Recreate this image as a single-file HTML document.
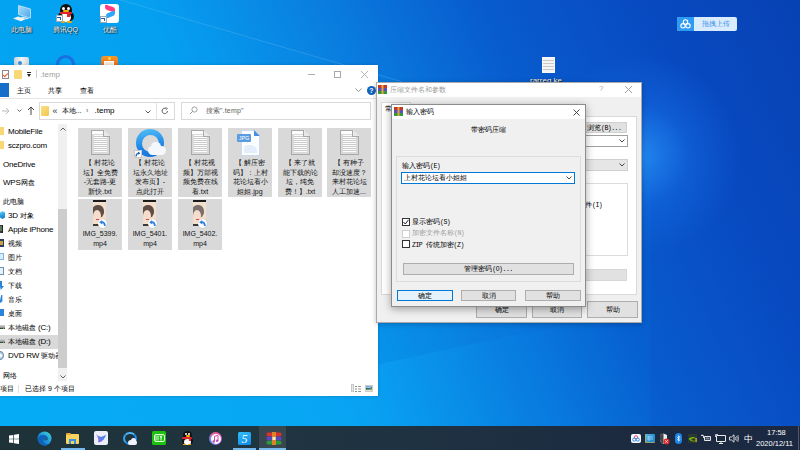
<!DOCTYPE html>
<html><head><meta charset="utf-8">
<style>
*{margin:0;padding:0;box-sizing:border-box}
html,body{width:800px;height:450px;overflow:hidden}
body{position:relative;font-family:"Liberation Sans",sans-serif;font-size:8px;color:#000;
background:linear-gradient(65deg,#02a8f2 0%,#06a0f0 35%,#0a7ee0 52%,#085cce 68%,#0849c0 85%,#0742b4 100%)}
.a{position:absolute}
.t{position:absolute;white-space:nowrap;line-height:10px}
.glow{left:540px;top:55px;width:200px;height:200px;border-radius:50%;background:radial-gradient(closest-side,rgba(45,155,255,.7),rgba(30,125,245,.3) 50%,rgba(20,100,230,0))}
.beam{left:95px;top:-8px;width:320px;height:1px;background:rgba(255,255,255,.13);transform:rotate(16.2deg);transform-origin:0 0}
.band{left:0;top:0;width:800px;height:450px;background:rgba(0,170,255,.06);clip-path:polygon(95px -8px,650px 153px,650px 450px,0 450px,0 -8px)}
.beam2{left:0;top:300px;width:642px;height:126px;background:linear-gradient(90deg,rgba(20,185,255,.22) 0,rgba(20,185,255,.22) 376px,rgba(10,165,255,.1) 490px,rgba(0,150,255,0) 620px);clip-path:polygon(0 0,376px 65px,490px 40px,566px 25px,642px 10px,642px 126px,0 126px)}
.taskbar{left:0;top:426px;width:800px;height:24px;background:linear-gradient(90deg,#1e3238 0%,#1f3540 35%,#1e3042 60%,#1c2a40 80%,#1b2842 100%)}
.win{background:#fff;box-shadow:0 0 3px rgba(0,0,0,.2)}
.dlg{background:#f0f0f0;box-shadow:0 0 6px rgba(0,0,0,.3);border:1px solid #9a9a9a}
.ex{font-size:8px;color:#000}
.tile{position:absolute;top:128px;width:44px;height:69px;background:#d9d9d9}
.tile2{position:absolute;top:199px;width:44px;height:51px;background:#d9d9d9}
.tl{position:absolute;left:0;width:44px;text-align:center;font-size:7px;line-height:9.7px;color:#111;white-space:nowrap}
.doc{position:absolute;width:19px;height:25px;background:repeating-linear-gradient(180deg,#fdfdfd 0,#fdfdfd 1px,#cbcbcb 1px,#cbcbcb 2px);border:1px solid #a8a8a8;background-clip:content-box;padding:4px 2px 2px 2px}
.doc:before{content:"";position:absolute;left:0;top:0;width:17px;height:3px;background:#fdfdfd}
.doc:after{content:"";position:absolute;right:-1px;top:-1px;width:6px;height:6px;background:linear-gradient(225deg,#d9d9d9 50%,#e8e8e8 50%);border-left:1px solid #a8a8a8;border-bottom:1px solid #a8a8a8}
.doc i{display:none}
.nav{position:absolute;left:8px;font-size:7px;line-height:10px;white-space:nowrap;color:#000}
.l{font-size:8px;letter-spacing:-0.2px}
.dt{font-size:7px;line-height:10px;color:#000}
.m{font-family:"Liberation Mono",monospace;font-size:6.5px;letter-spacing:-0.5px}
.btn{background:#e1e1e1;border:1px solid #adadad}
.bt{position:absolute;left:0;top:0;width:100%;height:100%;text-align:center;font-size:7px;line-height:15px;white-space:nowrap}
.cb{position:absolute;width:8px;height:8px;background:#fff;border:1px solid #333}
.dl{font-size:7px;line-height:10px;color:#fff;text-shadow:0 0 1px rgba(0,0,0,.9),1px 1px 1px rgba(0,0,0,.7)}
</style></head><body>
<div class="a glow"></div>
<div class="a band"></div>
<div class="a beam"></div>
<div class="a beam2"></div>

<!-- desktop icons -->
<div class="a" id="desk" style="left:0;top:0;width:800px;height:450px">
 <!-- this pc -->
 <svg class="a" style="left:12px;top:4px" width="21" height="19"><path d="M6.5 1.5L18.5 5V14L6.5 10.5Z" fill="url(#scr)" stroke="#cfe6f6" stroke-width=".8"/><defs><linearGradient id="scr" x1="0" y1="0" x2="1" y2="1"><stop offset="0" stop-color="#a8dcfb"/><stop offset="1" stop-color="#4aa6ea"/></linearGradient></defs><path d="M10 12.5L17 14.5L15 15.3L9 13.5Z" fill="#e6eef4"/><path d="M1 14.5L6 12.5L14 15L9 17.3Z" fill="#eef2f5"/></svg>
 <div class="t dl" style="left:11px;top:25px">此电脑</div>
 <!-- qq -->
 <div class="a" style="left:60px;top:4px;width:12px;height:11px;border-radius:6px 6px 3px 3px;background:#111"></div>
 <div class="a" style="left:62px;top:7px;width:3px;height:3px;border-radius:50%;background:#fff"></div>
 <div class="a" style="left:67px;top:7px;width:3px;height:3px;border-radius:50%;background:#fff"></div>
 <div class="a" style="left:63px;top:10px;width:6px;height:2px;border-radius:1px;background:#f5b000"></div>
 <div class="a" style="left:58px;top:12px;width:16px;height:9px;border-radius:5px 5px 5px 5px;background:#111"></div>
 <div class="a" style="left:61px;top:13px;width:10px;height:9px;border-radius:50%;background:#fff"></div>
 <div class="a" style="left:60px;top:12px;width:12px;height:2px;background:#e0262a"></div>
 <div class="a" style="left:67px;top:13px;width:3px;height:4px;background:#e0262a"></div>
 <div class="a" style="left:61px;top:21px;width:4px;height:2px;background:#f5a800;border-radius:1px"></div>
 <div class="a" style="left:67px;top:21px;width:5px;height:2px;background:#f5a800;border-radius:1px"></div>
 <div class="a" style="left:56px;top:15px;width:7px;height:7px;background:#fff;border:1px solid #9ab"></div>
 <div class="a" style="left:57px;top:17px;width:4px;height:3px;border-top:1px solid #1c5cb5;border-right:1px solid #1c5cb5"></div>
 <div class="t dl" style="left:53px;top:25px">腾讯QQ</div>
 <!-- youku -->
 <div class="a" style="left:100px;top:4px;width:19px;height:19px;border-radius:3px;background:#fff"></div>
 <div class="a" style="left:105px;top:6px;width:10px;height:5px;background:#ff3d7f;transform:skewY(20deg);border-radius:2px"></div>
 <div class="a" style="left:106px;top:12px;width:9px;height:5px;background:#2aa8ff;transform:skewY(-20deg);border-radius:2px"></div>
 <div class="a" style="left:100px;top:16px;width:7px;height:7px;background:#fff;border:1px solid #9ab"></div>
 <div class="a" style="left:101px;top:18px;width:4px;height:3px;border-top:1px solid #1c5cb5;border-right:1px solid #1c5cb5"></div>
 <div class="t dl" style="left:103px;top:25px">优酷</div>
 <!-- row 2 partial -->
 <div class="a" style="left:14px;top:57px;width:15px;height:9px;background:linear-gradient(90deg,#c9d2d8,#f2f5f7 50%,#cfd6db);border-radius:2px 2px 0 0"></div>
 <div class="a" style="left:18px;top:61px;width:4px;height:4px;border-radius:50%;background:#3a8fd8"></div>
 <div class="a" style="left:56px;top:55px;width:19px;height:19px;border-radius:50%;border:3px solid #1b6fe0"></div>
 <div class="a" style="left:101px;top:56px;width:17px;height:10px;background:linear-gradient(#f59a2a,#e8641a);border-radius:3px 3px 0 0"></div>
 <div class="a" style="left:108px;top:57px;width:3px;height:3px;border-radius:50%;background:#ffd84a"></div>
 <div class="a" style="left:104px;top:61px;width:10px;height:5px;background:#f4e8dc;border:1px solid #fff;border-bottom:none"></div>
 <!-- rarreg.key -->
 <div class="a" style="left:542px;top:57px;width:13px;height:16px;background:repeating-linear-gradient(180deg,#f4f4f4 0,#f4f4f4 2px,#c8c8c8 2px,#c8c8c8 3px);border:1px solid #f8f8f8"></div>
 <div class="t dl" style="left:530px;top:76px;font-size:8px">rarreg.ke</div>
 <!-- baidu drag widget -->
 <div class="a" style="left:677px;top:17px;width:60px;height:14px;border-radius:2px;background:#d8ecfd;overflow:hidden">
  <div class="a" style="left:0;top:0;width:17px;height:14px;background:#2d9af3"></div>
 </div>
 <svg class="a" style="left:680px;top:19px" width="11" height="10"><circle cx="5.5" cy="3" r="2.2" stroke="#fff" stroke-width="1.1" fill="none"/><circle cx="3" cy="6.8" r="2.2" stroke="#fff" stroke-width="1.1" fill="none"/><circle cx="8" cy="6.8" r="2.2" stroke="#fff" stroke-width="1.1" fill="none"/></svg>
 <div class="t" style="left:702px;top:19px;font-size:7px;color:#3a8de6">拖拽上传</div>
</div>

<!-- ============ EXPLORER ============ -->
<div class="a win ex" style="left:0;top:65px;width:378px;height:331px;overflow:hidden">
 <div style="position:absolute;left:-65px;top:-65px;width:800px;height:450px;transform:translate(65px,65px)"></div>
</div>
<div class="a" id="ex" style="left:0;top:0;width:378px;height:396px">
 <!-- title bar -->
 <div class="a" style="left:2px;top:70px;width:7px;height:9px;background:#fff;border:1px solid #8a8a8a"></div>
 <div class="a" style="left:3px;top:73px;width:5px;height:3px;border-left:1px solid #e05a2a;border-bottom:1px solid #e05a2a;transform:rotate(-45deg)"></div>
 <div class="a" style="left:14px;top:70px;width:8px;height:9px;background:#f8d775;border-radius:1px"></div>
 <div class="a" style="left:27px;top:72px;width:4px;height:1px;background:#222"></div>
 <div class="a" style="left:27px;top:74px;width:0;height:0;border-left:2px solid transparent;border-right:2px solid transparent;border-top:3px solid #222"></div>
 <div class="a" style="left:36px;top:70px;width:1px;height:8px;background:#d0d0d0"></div>
 <div class="t" style="left:40px;top:70px;font-size:8px;color:#a0a0a0">.temp</div>
 <div class="a" style="left:308px;top:74px;width:7px;height:1px;background:#b0b0b0"></div>
 <div class="a" style="left:334px;top:71px;width:7px;height:7px;border:1px solid #a8a8a8"></div>
 <svg class="a" style="left:360px;top:70px" width="9" height="9"><path d="M1 1L8 8M8 1L1 8" stroke="#aaa" stroke-width=".9"/></svg>
 <!-- ribbon -->
 <div class="a" style="left:0;top:83px;width:9px;height:14px;background:#166ec8"></div>
 <div class="t" style="left:17px;top:85.5px;font-size:7px">主页</div>
 <div class="t" style="left:48px;top:85.5px;font-size:7px">共享</div>
 <div class="t" style="left:79.5px;top:85.5px;font-size:7px">查看</div>
 <svg class="a" style="left:355px;top:88px" width="7" height="4"><path d="M0.5 0.5L3.5 3.5L6.5 0.5" stroke="#8a8a8a" fill="none" stroke-width=".9"/></svg>
 <div class="a" style="left:367px;top:86px;width:9px;height:9px;border-radius:50%;background:#1262be;color:#fff;font-size:7px;line-height:9px;text-align:center;font-weight:bold">?</div>
 <div class="a" style="left:0;top:98px;width:378px;height:1px;background:#e6e6e6"></div>
 <!-- address row -->
 <svg class="a" style="left:2px;top:107px" width="8" height="8"><path d="M0 4H7M4 1L7 4L4 7" stroke="#bbb" fill="none" stroke-width="1"/></svg>
 <svg class="a" style="left:17px;top:109px" width="5" height="4"><path d="M0.5 0.5L2.5 2.5L4.5 0.5" stroke="#666" fill="none" stroke-width="1"/></svg>
 <svg class="a" style="left:27px;top:106px" width="8" height="9"><path d="M4 9V1M1 4L4 1L7 4" stroke="#444" fill="none" stroke-width="1"/></svg>
 <div class="a" style="left:39px;top:102px;width:136px;height:18px;border:1px solid #d9d9d9"></div>
 <div class="a" style="left:156px;top:103px;width:1px;height:16px;background:#e3e3e3"></div>
 <div class="a" style="left:41px;top:106px;width:8px;height:10px;background:linear-gradient(135deg,#fbe08a,#f2c84a);border-radius:1px"></div>
 <div class="t" style="left:52.5px;top:105.5px;font-size:9px;color:#333">«</div>
 <div class="t" style="left:61.5px;top:106px;font-size:7px">本地...</div>
 <div class="t" style="left:86px;top:106px;font-size:7px;color:#555">›</div>
 <div class="t" style="left:94.5px;top:106px;font-size:8px">.temp</div>
 <svg class="a" style="left:145px;top:110px" width="6" height="4"><path d="M0.5 0.5L3 3L5.5 0.5" stroke="#555" fill="none" stroke-width="1"/></svg>
 <svg class="a" style="left:161px;top:107px" width="8" height="8"><path d="M6.5 4A2.7 2.7 0 1 1 5.2 1.6" stroke="#666" fill="none" stroke-width="1"/><path d="M4.5 0.3L6.5 1.5L4.8 3" stroke="#666" fill="none" stroke-width="0.8"/></svg>
 <div class="a" style="left:181px;top:102px;width:190px;height:18px;border:1px solid #d9d9d9"></div>
 <svg class="a" style="left:189px;top:106px" width="9" height="9"><circle cx="5.5" cy="3.5" r="2.6" stroke="#8a8a8a" fill="none" stroke-width="0.8"/><path d="M3.6 5.4L1 8" stroke="#8a8a8a" stroke-width="0.9"/></svg>
 <div class="t" style="left:205.5px;top:106px;font-size:7px;color:#606060;letter-spacing:0.2px">搜索".temp"</div>
 <!-- nav pane -->
 <div class="a" style="left:58px;top:124px;width:9px;height:257px;background:#f0f0f0"></div>
 <div class="a" style="left:58px;top:209px;width:9px;height:159px;background:#cdcdcd"></div>
 <svg class="a" style="left:60px;top:127px" width="6" height="4"><path d="M0.5 3.5L3 1L5.5 3.5" stroke="#606060" fill="none" stroke-width="1"/></svg>
 <svg class="a" style="left:60px;top:375px" width="6" height="4"><path d="M0.5 0.5L3 3L5.5 0.5" stroke="#606060" fill="none" stroke-width="1"/></svg>
 <div class="a" style="left:0;top:335px;width:58px;height:14px;background:#d9d9d9"></div>
 <div class="a" style="left:0;top:127px;width:4px;height:8px;background:#f8d775"></div>
 <div class="nav" style="top:127px"><span class="l">MobileFile</span></div>
 <div class="a" style="left:0;top:141px;width:4px;height:8px;background:#f8d775"></div>
 <div class="nav" style="top:141px"><span class="l">sczpro.com</span></div>
 <div class="nav" style="left:3px;top:160px"><span class="l">OneDrive</span></div>
 <div class="nav" style="left:3px;top:178px"><span class="l">WPS</span>网盘</div>
 <div class="nav" style="left:3px;top:197px">此电脑</div>
 <div class="a" style="left:0;top:211px;width:5px;height:8px;background:linear-gradient(160deg,#7fd8fa,#2a9ee0 50%,#1670c0);clip-path:polygon(0 20%,50% 0,100% 20%,100% 80%,50% 100%,0 80%)"></div>
 <div class="nav" style="top:211px"><span class="l">3D </span>对象</div>
 <div class="a" style="left:0;top:225px;width:3px;height:8px;background:#3a3a3a;border-right:1px solid #222"></div>
 <div class="a" style="left:0;top:226px;width:2px;height:5px;background:#5a7a5a"></div>
 <div class="nav" style="top:225px"><span class="l">Apple iPhone</span></div>
 <div class="a" style="left:0;top:239px;width:4px;height:8px;background:#2c3e5c"></div>
 <div class="a" style="left:0;top:241px;width:3px;height:4px;background:#c8a040"></div>
 <div class="nav" style="top:239px">视频</div>
 <div class="a" style="left:0;top:253px;width:4px;height:7px;background:#d8ecfa;border:1px solid #7db6e6;border-left:none"></div>
 <div class="nav" style="top:253px">图片</div>
 <div class="a" style="left:0;top:267px;width:4px;height:8px;background:#e9f0f8;border:1px solid #6a8fb8;border-left:none"></div>
 <div class="nav" style="top:267px">文档</div>
 <div class="a" style="left:0;top:281px;width:4px;height:9px;background:#2a85d8;clip-path:polygon(0 0,50% 0,50% 55%,100% 55%,20% 100%,0 60%)"></div>
 <div class="nav" style="top:281px">下载</div>
 <div class="a" style="left:0;top:295px;width:4px;height:8px;background:#2a85d8;clip-path:polygon(30% 0,60% 0,60% 80%,0 100%,0 70%)"></div>
 <div class="nav" style="top:295px">音乐</div>
 <div class="a" style="left:0;top:309px;width:4px;height:7px;background:#2a85d8"></div>
 <div class="nav" style="top:309px">桌面</div>
 <div class="a" style="left:0;top:325px;width:5px;height:4px;background:linear-gradient(#d8d8d8,#8a8a8a);border-bottom:1px solid #444"></div>
 <div class="a" style="left:3px;top:328px;width:1px;height:1px;background:#3c3"></div>
 <div class="nav" style="top:323px">本地磁盘<span class="l"> (C:)</span></div>
 <div class="a" style="left:0;top:339px;width:5px;height:4px;background:linear-gradient(#d8d8d8,#8a8a8a);border-bottom:1px solid #444"></div>
 <div class="a" style="left:3px;top:342px;width:1px;height:1px;background:#3c3"></div>
 <div class="nav" style="top:337px">本地磁盘<span class="l"> (D:)</span></div>
 <div class="a" style="left:-4px;top:351px;width:8px;height:9px;border-radius:50%;background:radial-gradient(circle at 60% 50%,#fff 0,#fff 1px,#c9dcec 1.5px,#7aa6cc 100%);border:1px solid #6a8fb0"></div>
 <div class="nav" style="top:351px;width:50px;overflow:hidden"><span class="l">DVD RW </span>驱动器</div>
 <div class="nav" style="left:3px;top:371px">网络</div>
 <!-- status bar -->
 <div class="t" style="left:0;top:384px;font-size:7px">项目</div>
 <div class="a" style="left:18px;top:385px;width:1px;height:8px;background:#e0e0e0"></div>
 <div class="t" style="left:25px;top:384px;font-size:7px">已选择 9 个项目</div>
 <div class="a" style="left:351px;top:384px;width:3px;height:8px;background:#e8e8e8;border:1px solid #c8c8c8"></div>
 <div class="a" style="left:355px;top:385.5px;width:2px;height:1px;background:#8a8a8a;box-shadow:0 2.5px 0 #8a8a8a,0 5px 0 #8a8a8a"></div>
 <div class="a" style="left:358px;top:385.5px;width:3px;height:1px;background:#9a9a9a;box-shadow:0 2.5px 0 #9a9a9a,0 5px 0 #9a9a9a"></div>
 <div class="a" style="left:365px;top:385px;width:8px;height:7px;background:#e8e4dc;border:1px solid #d0ccc4"></div>
 <div class="a" style="left:366px;top:386px;width:6px;height:4px;background:linear-gradient(170deg,#5a9ee0 0,#9ec8ee 45%,#2e6a4a 50%,#a0b8a8 100%)"></div>
 <!-- tiles row1 -->
 <div class="tile" style="left:78px">
   <div class="doc" style="left:13px;top:2px"><i style="top:7px"></i><i style="top:9px"></i><i style="top:11px"></i><i style="top:13px"></i><i style="top:15px"></i><i style="top:17px"></i><i style="top:19px"></i></div>
   <div class="tl" style="top:30px">【 村花论<br>坛】全免费<br>-无套路-更<br>新快.txt</div>
 </div>
 <div class="tile" style="left:128px">
   <div class="a" style="left:8px;top:1px;width:28px;height:28px;border-radius:50%;background:linear-gradient(170deg,#56c0f8,#1d86e6 60%,#1570d8)"></div>
   <div class="a" style="left:13.5px;top:6.5px;width:17px;height:17px;border-radius:50%;background:#d9d9d9"></div>
   <div class="a" style="left:20px;top:18px;width:18px;height:9px;border-radius:5px;background:#f4f8fc"></div>
   <div class="a" style="left:23px;top:14px;width:10px;height:9px;border-radius:50%;background:#f4f8fc"></div>
   <div class="a" style="left:6px;top:22px;width:8px;height:8px;background:#fff;border:1px solid #c8c8c8"></div>
   <svg class="a" style="left:7px;top:23px" width="6" height="6"><path d="M1 5.5Q1 2.5 4 2.2" stroke="#1f5fb8" stroke-width="1.2" fill="none"/><path d="M3 0.5L5.5 2.2L3 3.8Z" fill="#1f5fb8"/></svg>
   <div class="tl" style="top:30px">【 村花论<br>坛永久地址<br>发布页】-<br>点此打开</div>
 </div>
 <div class="tile" style="left:178px">
   <div class="doc" style="left:13px;top:2px"><i style="top:7px"></i><i style="top:9px"></i><i style="top:11px"></i><i style="top:13px"></i><i style="top:15px"></i><i style="top:17px"></i><i style="top:19px"></i></div>
   <div class="tl" style="top:30px">【 村花视<br>频】万部视<br>频免费在线<br>看.txt</div>
 </div>
 <div class="tile" style="left:228px">
   <div class="a" style="left:13px;top:2px;width:19px;height:26px;background:#fbfdff;border:1px solid #c9daf0;clip-path:polygon(0 0,70% 0,100% 22%,100% 100%,0 100%)"></div>
   <div class="a" style="left:26px;top:2px;width:6px;height:6px;background:#4a8fdc;clip-path:polygon(0 0,100% 100%,0 100%)"></div>
   <div class="a" style="left:16px;top:17px;width:13px;height:8px;background:#e4eefa;border-radius:4px 6px 0 0"></div>
   <div class="a" style="left:9px;top:6px;width:14px;height:8px;border-radius:1px;background:#5b9be0;color:#fff;font-size:5.5px;line-height:8px;text-align:center">JPG</div>
   <div class="tl" style="top:30px">【 解压密<br>码】：上村<br>花论坛看小<br>姐姐.jpg</div>
 </div>
 <div class="tile" style="left:278px">
   <div class="doc" style="left:13px;top:2px"><i style="top:7px"></i><i style="top:9px"></i><i style="top:11px"></i><i style="top:13px"></i><i style="top:15px"></i><i style="top:17px"></i><i style="top:19px"></i></div>
   <div class="tl" style="top:30px">【 来了就<br>能下载的论<br>坛，纯免<br>费！】.txt</div>
 </div>
 <div class="tile" style="left:327px">
   <div class="doc" style="left:13px;top:2px"><i style="top:7px"></i><i style="top:9px"></i><i style="top:11px"></i><i style="top:13px"></i><i style="top:15px"></i><i style="top:17px"></i><i style="top:19px"></i></div>
   <div class="tl" style="top:30px">【 有种子<br>却没速度？<br>来村花论坛<br>人工加速...</div>
 </div>
 <!-- tiles row2 -->
 <div class="tile2" style="left:78px">
   <div class="a" style="left:15px;top:1px;width:13px;height:26px;background:#f3e0cc;overflow:hidden">
    <div class="a" style="left:-1px;top:5px;width:12px;height:13px;border-radius:45%;background:#5e4e46"></div>
    <div class="a" style="left:0px;top:10px;width:8px;height:12px;border-radius:50%;background:#f6dccb"></div>
    <div class="a" style="left:3px;top:19px;width:3px;height:1px;background:#d84a5a"></div>
    <div class="a" style="left:0;top:0;width:13px;height:2px;background:#1a1a1a"></div>
    <div class="a" style="left:0;top:24px;width:13px;height:2px;background:#3a3a3a"></div>
   </div>
   <div class="a" style="left:20px;top:20px;width:9px;height:9px;border-radius:50%;background:#fff;box-shadow:0 0 1px rgba(0,0,0,.3)"></div>
   <svg class="a" style="left:21px;top:21px" width="7" height="7"><path d="M5.8 6Q6 2.3 2.5 2.2" stroke="#2b7fe8" stroke-width="1.8" fill="none"/><path d="M3.2 0L0.2 2.2L3.2 4.4Z" fill="#2b7fe8"/></svg>
   <div class="tl" style="top:30px">IMG_5399.<br>mp4</div>
 </div>
 <div class="tile2" style="left:128px">
   <div class="a" style="left:15px;top:1px;width:13px;height:26px;background:#f3e0cc;overflow:hidden">
    <div class="a" style="left:-1px;top:5px;width:12px;height:13px;border-radius:45%;background:#5e4e46"></div>
    <div class="a" style="left:0px;top:10px;width:8px;height:12px;border-radius:50%;background:#f6dccb"></div>
    <div class="a" style="left:3px;top:19px;width:3px;height:1px;background:#d84a5a"></div>
    <div class="a" style="left:0;top:0;width:13px;height:2px;background:#1a1a1a"></div>
    <div class="a" style="left:0;top:24px;width:13px;height:2px;background:#3a3a3a"></div>
   </div>
   <div class="a" style="left:20px;top:20px;width:9px;height:9px;border-radius:50%;background:#fff;box-shadow:0 0 1px rgba(0,0,0,.3)"></div>
   <svg class="a" style="left:21px;top:21px" width="7" height="7"><path d="M5.8 6Q6 2.3 2.5 2.2" stroke="#2b7fe8" stroke-width="1.8" fill="none"/><path d="M3.2 0L0.2 2.2L3.2 4.4Z" fill="#2b7fe8"/></svg>
   <div class="tl" style="top:30px">IMG_5401.<br>mp4</div>
 </div>
 <div class="tile2" style="left:178px">
   <div class="a" style="left:15px;top:1px;width:13px;height:26px;background:#f3e0cc;overflow:hidden">
    <div class="a" style="left:-1px;top:5px;width:12px;height:13px;border-radius:45%;background:#7a716c"></div>
    <div class="a" style="left:0px;top:10px;width:8px;height:12px;border-radius:50%;background:#f6dccb"></div>
    <div class="a" style="left:3px;top:19px;width:3px;height:1px;background:#d84a5a"></div>
    <div class="a" style="left:0;top:0;width:13px;height:2px;background:#1a1a1a"></div>
    <div class="a" style="left:0;top:24px;width:13px;height:2px;background:#3a3a3a"></div>
   </div>
   <div class="a" style="left:20px;top:20px;width:9px;height:9px;border-radius:50%;background:#fff;box-shadow:0 0 1px rgba(0,0,0,.3)"></div>
   <svg class="a" style="left:21px;top:21px" width="7" height="7"><path d="M5.8 6Q6 2.3 2.5 2.2" stroke="#2b7fe8" stroke-width="1.8" fill="none"/><path d="M3.2 0L0.2 2.2L3.2 4.4Z" fill="#2b7fe8"/></svg>
   <div class="tl" style="top:30px">IMG_5402.<br>mp4</div>
 </div>
</div>

<!-- ============ WINRAR PARENT ============ -->
<div class="a" style="left:376px;top:82px;width:266px;height:241px;background:#f0f0f0;border:1px solid #aaa;box-shadow:0 1px 5px rgba(0,0,0,.25)">
 <div class="a" style="left:0;top:0;width:264px;height:14px;background:#fff"></div>
</div>
<div class="a" id="par" style="left:0;top:0;width:800px;height:450px">
 <svg class="a" style="left:378px;top:85px" width="9" height="9"><rect x="0" y="0" width="9" height="3" fill="#c0392b"/><rect x="0" y="3" width="9" height="3" fill="#5b4fbf"/><rect x="0" y="6" width="9" height="3" fill="#2e9a3a"/><rect x="3.5" y="0" width="2" height="9" fill="#e8a33a"/></svg>
 <div class="t dt" style="left:390px;top:84.5px;color:#9a9a9a">压缩文件名和参数</div>
 <div class="t" style="left:599px;top:84px;font-size:8px;color:#aaa">?</div>
 <svg class="a" style="left:624px;top:85px" width="9" height="9"><path d="M1 1L8 8M8 1L1 8" stroke="#999" stroke-width=".9"/></svg>
 <div class="a" style="left:381px;top:116px;width:256px;height:179px;background:#fff;border:1px solid #d9d9d9"></div>
 <div class="a" style="left:381px;top:102px;width:30px;height:16px;background:#fff;border:1px solid #d9d9d9;border-bottom:none"></div>
 <div class="a" style="left:382px;top:115px;width:28px;height:3px;background:#fff"></div>
 <div class="t dt" style="left:385px;top:104px">常规</div>
 <div class="a btn" style="left:585px;top:122px;width:42px;height:11px;background:#e1e1e1;border:1px solid #d0d0d0"></div>
 <div class="t dt" style="left:587px;top:122.5px;font-size:6.5px">浏览<span class="m">(B)...</span></div>
 <div class="a" style="left:585px;top:135px;width:43px;height:12px;background:#fff;border:1px solid #a0a0a0"></div>
 <svg class="a" style="left:619px;top:139px" width="6" height="4"><path d="M0.5 0.5L3 3L5.5 0.5" stroke="#444" fill="none" stroke-width="1"/></svg>
 <div class="a" style="left:585px;top:159px;width:43px;height:12px;background:#e6e6e6;border:1px solid #cfcfcf"></div>
 <svg class="a" style="left:619px;top:163px" width="6" height="4"><path d="M0.5 0.5L3 3L5.5 0.5" stroke="#444" fill="none" stroke-width="1"/></svg>
 <div class="a" style="left:560px;top:183px;width:68px;height:73px;background:#fff;border:1px solid #dcdcdc"></div>
 <div class="t dt" style="left:585px;top:200px">件<span class="m">(I)</span></div>
 <div class="a" style="left:560px;top:269px;width:67px;height:12px;background:#e1e1e1;border:1px solid #d6d6d6"></div>
 <div class="a btn" style="left:476px;top:301px;width:51px;height:17px"><div class="bt">确定</div></div>
 <div class="a btn" style="left:532px;top:301px;width:50px;height:17px"><div class="bt">取消</div></div>
 <div class="a btn" style="left:587px;top:301px;width:51px;height:17px"><div class="bt">帮助</div></div>
</div>

<!-- ============ PASSWORD DIALOG ============ -->
<div class="a" style="left:391px;top:104px;width:195px;height:203px;background:#f0f0f0;border:1px solid #8c8c8c;box-shadow:0 2px 8px rgba(0,0,0,.35)">
 <div class="a" style="left:0;top:0;width:193px;height:14px;background:#fff"></div>
</div>
<div class="a" id="pwd" style="left:0;top:0;width:800px;height:450px">
 <svg class="a" style="left:394px;top:107px" width="9" height="9"><rect x="0" y="0" width="9" height="3" fill="#c0392b"/><rect x="0" y="3" width="9" height="3" fill="#5b4fbf"/><rect x="0" y="6" width="9" height="3" fill="#2e9a3a"/><rect x="3.5" y="0" width="2" height="9" fill="#e8a33a"/></svg>
 <div class="t dt" style="left:406px;top:107px">输入密码</div>
 <svg class="a" style="left:572.5px;top:108.5px" width="7" height="7"><path d="M0.5 0.5L6.5 6.5M6.5 0.5L0.5 6.5" stroke="#333" stroke-width=".9"/></svg>
 <div class="t dt" style="left:471px;top:125px">带密码压缩</div>
 <div class="a" style="left:396px;top:156px;width:185px;height:126px;border:1px solid #dcdcdc"></div>
 <div class="t dt" style="left:402px;top:161px">输入密码<span class="m">(E)</span></div>
 <div class="a" style="left:401px;top:172px;width:174px;height:12px;background:#fff;border:1px solid #0078d7"></div>
 <div class="t dt" style="left:404px;top:173px">上村花论坛看小姐姐</div>
 <svg class="a" style="left:566px;top:176px" width="6" height="4"><path d="M0.5 0.5L3 3L5.5 0.5" stroke="#444" fill="none" stroke-width="1"/></svg>
 <div class="a cb" style="left:402px;top:218px"></div>
 <svg class="a" style="left:403px;top:219px" width="6" height="6"><path d="M0.5 3L2.3 5L5.5 0.8" stroke="#222" fill="none" stroke-width="1"/></svg>
 <div class="t dt" style="left:412px;top:216.5px">显示密码<span class="m">(S)</span></div>
 <div class="a cb" style="left:402px;top:230px;border-color:#cfcfcf"></div>
 <div class="t dt" style="left:412px;top:228px;color:#a0a0a0">加密文件名称<span class="m">(N)</span></div>
 <div class="a cb" style="left:402px;top:240px"></div>
 <div class="t dt" style="left:412px;top:239.5px"><span class="m">ZIP </span>传统加密<span class="m">(Z)</span></div>
 <div class="a btn" style="left:403px;top:263px;width:171px;height:12px"><div class="bt" style="line-height:10px">管理密码<span class="m">(O)...</span></div></div>
 <div class="a btn" style="left:397px;top:290px;width:56px;height:11px;background:#e5f1fb;border-color:#0078d7"><div class="bt" style="line-height:9px">确定</div></div>
 <div class="a btn" style="left:461px;top:290px;width:55px;height:11px"><div class="bt" style="line-height:9px">取消</div></div>
 <div class="a btn" style="left:525px;top:290px;width:56px;height:11px"><div class="bt" style="line-height:9px">帮助</div></div>
</div>

<div class="a taskbar"></div>
<div class="a" id="tb" style="left:0;top:0;width:800px;height:450px">
 <svg class="a" style="left:9px;top:434px" width="10" height="10"><path d="M0 1.5L4.3 0.9V4.7H0Z M5 0.8L10 0V4.7H5Z M0 5.3H4.3V9.1L0 8.5Z M5 5.3H10V10L5 9.2Z" fill="#fff"/></svg>
 <!-- edge -->
 <svg class="a" style="left:37px;top:431px" width="15" height="15" viewBox="0 0 15 15"><defs><linearGradient id="eg" x1="0" y1="1" x2="1" y2="0"><stop offset="0" stop-color="#0b4f9c"/><stop offset=".45" stop-color="#1a8fe0"/><stop offset=".8" stop-color="#35c0d8"/><stop offset="1" stop-color="#7ad860"/></linearGradient></defs><circle cx="7.5" cy="7.5" r="7" fill="url(#eg)"/><path d="M1 8.5Q1.5 4 6 4Q10.5 4 11 7.5Q8.5 6.5 7 8Q5.5 10 7.5 12.5Q9 14 12 12.8Q9.5 15.5 5.5 14.3Q1.5 13 1 8.5Z" fill="#0f63b8"/><path d="M7 8Q8.5 6.5 11 7.5Q11 9.5 9 9.6Q7.5 9.6 7 8Z" fill="#1e2c36" opacity=".55"/></svg>
 <!-- explorer -->
 <div class="a" style="left:66px;top:434px;width:13px;height:10px;background:#f8d35e;border-radius:1px"></div>
 <div class="a" style="left:66px;top:433px;width:5px;height:2px;background:#e8a83a;border-radius:1px 1px 0 0"></div>
 <div class="a" style="left:69px;top:439px;width:7px;height:5px;background:#3c8fe0"></div>
 <div class="a" style="left:71px;top:441px;width:3px;height:3px;background:#f8d35e"></div>
 <div class="a" style="left:61px;top:448px;width:24px;height:2px;background:#76b9ed"></div>
 <!-- feishu-ish -->
 <div class="a" style="left:94px;top:431px;width:14px;height:14px;border-radius:2px;background:#eceefa"></div>
 <svg class="a" style="left:95px;top:432px" width="12" height="12"><path d="M1 2C4 5 6 6 11 3C9 8 6 11 3 10C4 8 3 5 1 2Z" fill="#7a73e8"/><path d="M5 6L11 3L8 8Z" fill="#3b8df0"/></svg>
 <!-- qq browser -->
 <div class="a" style="left:123px;top:432px;width:13.5px;height:13px;border-radius:50%;border:2.2px solid #1e8ef0;border-top-color:#4ab8f8;border-left-color:#34a4f4"></div>
 <div class="a" style="left:128px;top:440px;width:9px;height:5px;border-radius:3px 3px 2px 2px;background:#eef4fa"></div>
 <div class="a" style="left:130.5px;top:437.5px;width:5px;height:5px;border-radius:50%;background:#eef4fa"></div>
 <!-- iqiyi -->
 <div class="a" style="left:152px;top:431px;width:14px;height:14px;border-radius:1.5px;background:#1cc20f"></div>
 <div class="a" style="left:153.5px;top:434px;width:11px;height:8px;border:1px solid #e8ffe0;border-radius:2px"></div>
 <svg class="a" style="left:155px;top:435px" width="8" height="6"><path d="M1 0.5V5.5M3 0.5V5.5M5 0.5L6 3L7 0.5M6 3V5.5" stroke="#fff" stroke-width=".9" fill="none"/></svg>
 <!-- qq -->
 <div class="a" style="left:183px;top:431px;width:9px;height:8px;border-radius:5px 5px 2px 2px;background:#111"></div>
 <div class="a" style="left:184.5px;top:433px;width:2px;height:2px;border-radius:50%;background:#fff"></div>
 <div class="a" style="left:188px;top:433px;width:2px;height:2px;border-radius:50%;background:#fff"></div>
 <div class="a" style="left:185.5px;top:435px;width:4px;height:1.5px;border-radius:1px;background:#f5b000"></div>
 <div class="a" style="left:181.5px;top:438px;width:11px;height:6px;border-radius:4px;background:#111"></div>
 <div class="a" style="left:183.5px;top:438.5px;width:7px;height:6px;border-radius:50%;background:#fff"></div>
 <div class="a" style="left:182px;top:437px;width:10px;height:2px;background:#e0262a;border-radius:1px"></div>
 <div class="a" style="left:189px;top:438px;width:2px;height:3px;background:#e0262a"></div>
 <div class="a" style="left:183px;top:444px;width:3px;height:1px;background:#f5a800"></div>
 <div class="a" style="left:188px;top:444px;width:3px;height:1px;background:#f5a800"></div>
 <!-- itunes -->
 <div class="a" style="left:209px;top:432px;width:13px;height:13px;border-radius:50%;background:conic-gradient(#f35a8c,#c04ee0,#5a8cf5,#f35a8c)"></div>
 <div class="a" style="left:210.5px;top:433.5px;width:10px;height:10px;border-radius:50%;background:#fff"></div>
 <svg class="a" style="left:212px;top:435px" width="7" height="8"><path d="M2.5 6.5V1.2L6 0.5V5.5" stroke="#d04aa0" stroke-width="1" fill="none"/><circle cx="1.7" cy="6.5" r="1.3" fill="#d04aa0"/><circle cx="5.2" cy="5.7" r="1.3" fill="#b050d0"/></svg>
 <!-- 5 -->
 <div class="a" style="left:238px;top:432px;width:13px;height:13px;border-radius:1.5px;background:linear-gradient(160deg,#34bcf8,#0b8ae8)"></div>
 <div class="t" style="left:241.5px;top:432.5px;font-family:'Liberation Serif',serif;font-style:italic;font-size:12px;color:#fff;line-height:12px">5</div>
 <div class="a" style="left:233px;top:448px;width:23px;height:2px;background:#76b9ed"></div>
 <!-- winrar (active) -->
 <div class="a" style="left:259px;top:426px;width:27px;height:24px;background:#384650"></div>
 <svg class="a" style="left:265.5px;top:432px" width="16" height="13"><rect x="0.5" y="0.5" width="15" height="3.8" rx="1.5" fill="#d8302c"/><rect x="0.5" y="4.6" width="15" height="3.8" rx="1.5" fill="#5848bc"/><rect x="0.5" y="8.7" width="15" height="3.8" rx="1.5" fill="#2a9a3a"/><rect x="6" y="0" width="4" height="13" fill="#d8842a"/><rect x="6.5" y="5" width="3" height="3" fill="#f6ecd0"/></svg>
 <div class="a" style="left:259px;top:448px;width:27px;height:2px;background:#76b9ed"></div>
 <!-- tray -->
 <div class="a" style="left:631px;top:434px;width:10px;height:9px;border-radius:2px;background:#f6f8fb"></div>
 <svg class="a" style="left:632px;top:435px" width="8" height="7"><circle cx="4" cy="2.3" r="1.6" stroke="#e84a6a" stroke-width="1" fill="none"/><circle cx="2.2" cy="4.6" r="1.6" stroke="#3a8ef0" stroke-width="1" fill="none"/><circle cx="5.8" cy="4.6" r="1.6" stroke="#3a8ef0" stroke-width="1" fill="none"/></svg>
 <div class="a" style="left:645px;top:434px;width:10px;height:9px;border-radius:1px;background:linear-gradient(135deg,#5ab8e8,#2a90d0 60%,#2a80c0);box-shadow:inset 1px -1px 0 rgba(232,176,48,.6)"></div>
 <svg class="a" style="left:647px;top:436px" width="6" height="5"><path d="M0 1H6M0 3H6M2 0V5" stroke="#bfe6fb" stroke-width=".6"/></svg>
 <svg class="a" style="left:659px;top:433px" width="11" height="12"><path d="M1 2L4.5 0.5L8 2V6Q8 9.5 4.5 11Q1 9.5 1 6Z" fill="#eee"/><path d="M1 2L4.5 0.5V11Q1 9.5 1 6Z" fill="#444"/><circle cx="7.5" cy="8.5" r="3" fill="#e02a2a"/><path d="M6.3 7.3L8.7 9.7M8.7 7.3L6.3 9.7" stroke="#fff" stroke-width=".8"/></svg>
 <div class="a" style="left:675px;top:433px;width:7px;height:11px;border-radius:3.5px;background:#1a84e8"></div>
 <svg class="a" style="left:676px;top:435px" width="5" height="7"><path d="M1 1.8L4 4.8L2.5 6.3V0.7L4 2.2L1 5.2" stroke="#fff" stroke-width=".7" fill="none"/></svg>
 <div class="a" style="left:688px;top:434px;width:9px;height:9px;background:#2a3a30"></div>
 <svg class="a" style="left:688px;top:435px" width="9" height="8"><path d="M0.5 4Q4 0.5 8.5 3.5Q5 2.5 3 4.5Q5 6.5 8.5 5.5Q4 8 0.5 4Z" fill="#76b900"/><rect x="7.5" y="3" width="1.2" height="4" fill="#e8c020"/></svg>
 <svg class="a" style="left:700px;top:434px" width="12" height="8"><path d="M4.5 2.5H10.5V6.5H4.5Z" stroke="#e8e8e8" stroke-width="1" fill="none"/><path d="M1 1.5H3.5V4M2.2 1.5V0.5M3.5 3.5H4.5" stroke="#e8e8e8" stroke-width=".9" fill="none"/><rect x="5.5" y="3.5" width="4" height="2" fill="#e8e8e8" opacity=".5"/></svg>
 <svg class="a" style="left:715px;top:434px" width="11" height="10"><path d="M1.5 1.5H10.5V7.5H1.5Z" stroke="#e8e8e8" stroke-width="1" fill="none"/><path d="M6 7.5V9.5M4 9.5H8" stroke="#e8e8e8" stroke-width="1"/><path d="M0.5 0.5V3M0.5 0.5H3" stroke="#e8e8e8" stroke-width=".8"/></svg>
 <svg class="a" style="left:729px;top:434px" width="10" height="9"><path d="M0.5 3H2.5L5 0.8V8.2L2.5 6H0.5Z" stroke="#e8e8e8" fill="none" stroke-width=".9"/><path d="M6.3 3Q7.1 4.5 6.3 6M7.6 2Q8.8 4.5 7.6 7M8.8 1Q10.3 4.5 8.8 8" stroke="#e8e8e8" fill="none" stroke-width=".7"/></svg>
 <div class="t" style="left:744px;top:434px;font-size:9px;color:#fff;line-height:10px">中</div>
 <div class="t" style="left:767px;top:428px;font-size:7.5px;color:#fff;line-height:10px">17:58</div>
 <div class="t" style="left:756px;top:438.5px;font-size:7.5px;color:#fff;line-height:10px">2020/12/11</div>
 <div class="a" style="left:798px;top:426px;width:1px;height:24px;background:#556"></div>
</div>
</body></html>
